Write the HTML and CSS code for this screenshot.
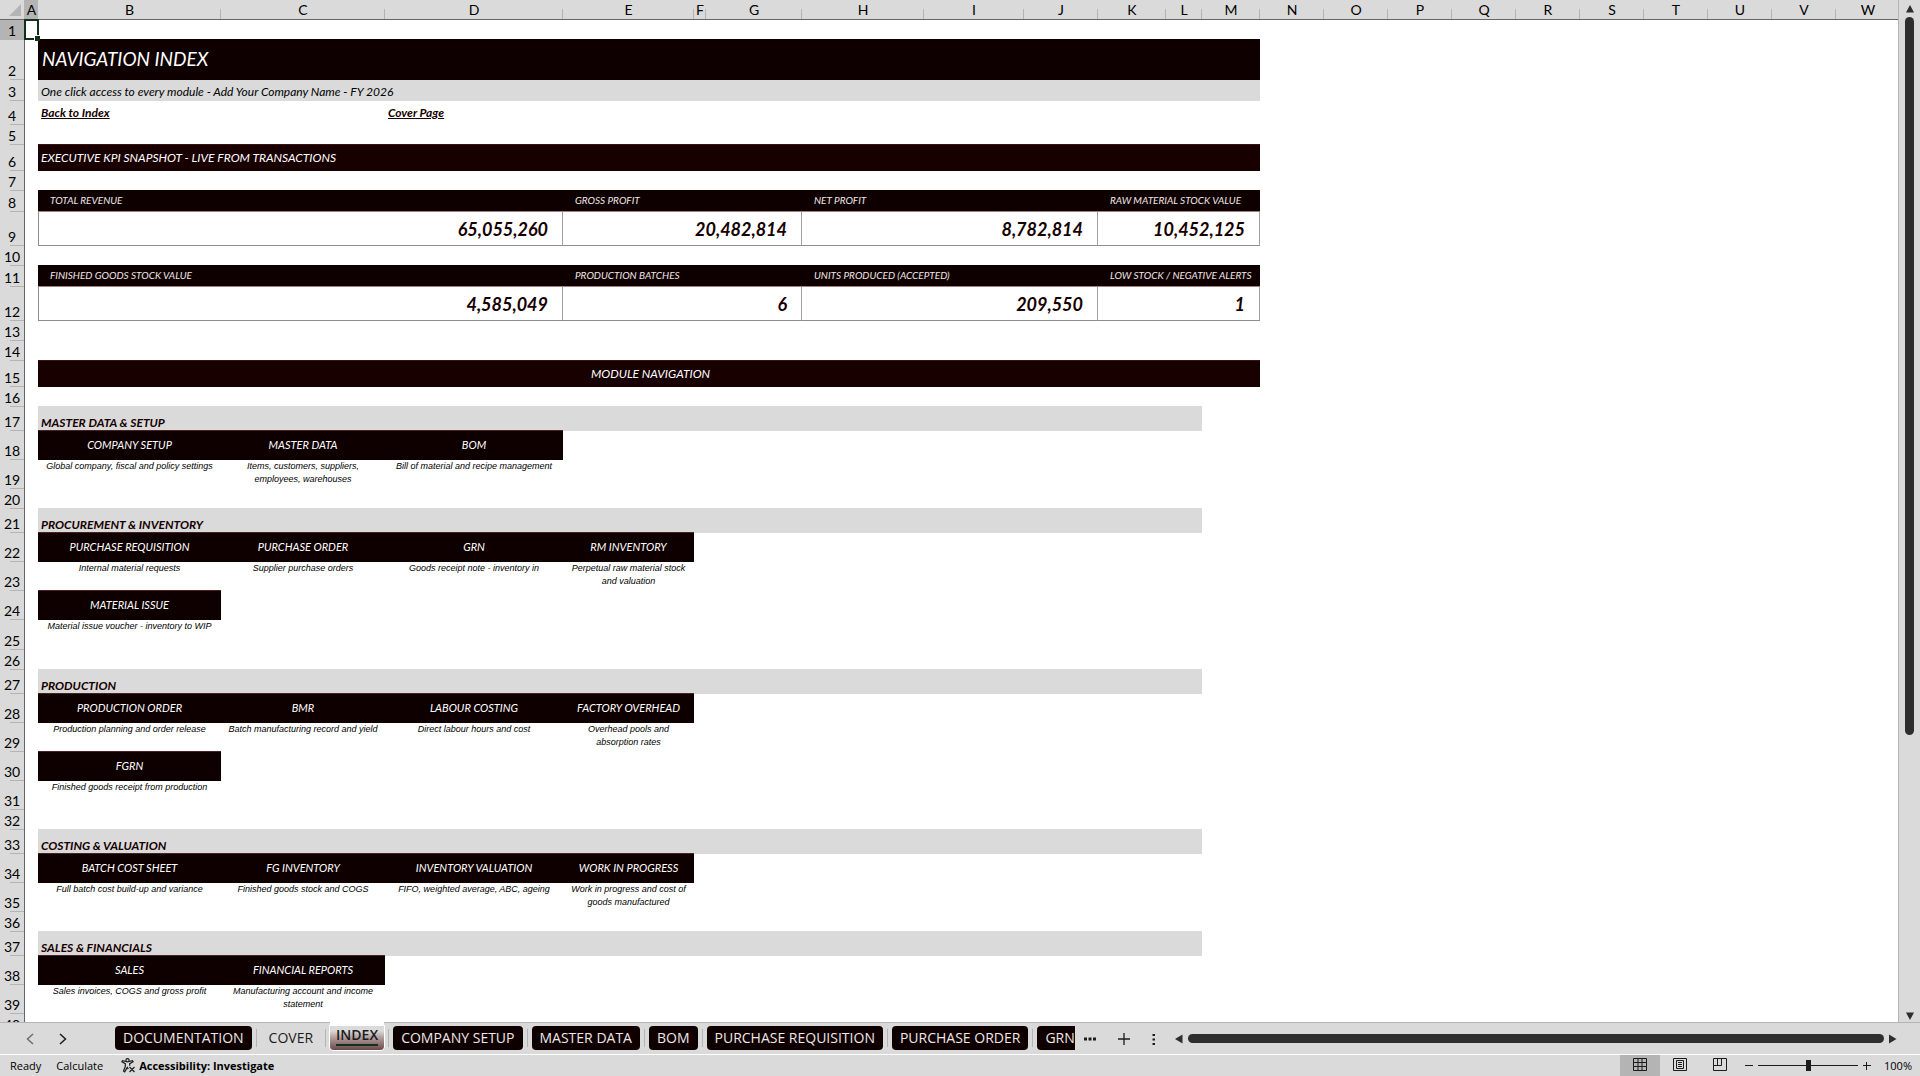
FILE: index.html
```html
<!DOCTYPE html>
<html lang="en">
<head>
    <meta charset="UTF-8">
    <meta name="viewport" content="width=device-width, initial-scale=1.0">
    <title>Navigation Index</title>
    <link rel="stylesheet" href="styles.css">
</head>
<body>
    <div class="workbook">
        <main class="sheet-area">
            <div class="sheet">
                <table class="grid">
                    <colgroup>
                        <col class="w-head"><col class="w-a"><col class="w-b"><col class="w-c"><col class="w-d"><col class="w-e"><col class="w-f"><col class="w-g"><col class="w-h"><col class="w-i"><col class="w-j"><col class="w-k"><col class="w-l"><col class="w-m">
                        <col span="10" class="w-std">
                    </colgroup>
                    <thead>
                        <tr>
                            <th class="corner"><svg width="12" height="12" viewBox="0 0 12 12"><path d="M12 0v12H0z" fill="#b4b4b4"/></svg></th>
                            <th class="active">A</th><th>B</th><th>C</th><th>D</th><th>E</th><th>F</th><th>G</th><th>H</th><th>I</th><th>J</th><th>K</th><th>L</th><th>M</th><th>N</th><th>O</th><th>P</th><th>Q</th><th>R</th><th>S</th><th>T</th><th>U</th><th>V</th><th>W</th>
                        </tr>
                    </thead>
                    <tbody>
                        <tr class="h20"><th class="active">1</th><td class="selected"></td></tr>
                        <tr class="h40"><th>2</th><td></td><td colspan="12" class="title">NAVIGATION INDEX</td></tr>
                        <tr class="h21"><th>3</th><td></td><td colspan="12" class="subtitle">One click access to every module - Add Your Company Name - FY 2026</td></tr>
                        <tr class="h24"><th>4</th><td></td><td colspan="2" class="link"><a href="#index">Back to Index</a></td><td class="link"><a href="#cover">Cover Page</a></td></tr>
                        <tr class="h20"><th>5</th></tr>
                        <tr class="h26"><th>6</th><td></td><td colspan="12" class="banner">EXECUTIVE KPI SNAPSHOT - LIVE FROM TRANSACTIONS</td></tr>
                        <tr class="h20"><th>7</th></tr>
                        <tr class="h21"><th>8</th><td></td><td colspan="3" class="kpi-name">TOTAL REVENUE</td><td colspan="3" class="kpi-name">GROSS PROFIT</td><td colspan="3" class="kpi-name">NET PROFIT</td><td colspan="3" class="kpi-name">RAW MATERIAL STOCK VALUE</td></tr>
                        <tr class="h34"><th>9</th><td></td><td colspan="3" class="kpi-value">65,055,260</td><td colspan="3" class="kpi-value">20,482,814</td><td colspan="3" class="kpi-value">8,782,814</td><td colspan="3" class="kpi-value">10,452,125</td></tr>
                        <tr class="h20"><th>10</th></tr>
                        <tr class="h21"><th>11</th><td></td><td colspan="3" class="kpi-name">FINISHED GOODS STOCK VALUE</td><td colspan="3" class="kpi-name">PRODUCTION BATCHES</td><td colspan="3" class="kpi-name">UNITS PRODUCED (ACCEPTED)</td><td colspan="3" class="kpi-name">LOW STOCK / NEGATIVE ALERTS</td></tr>
                        <tr class="h34"><th>12</th><td></td><td colspan="3" class="kpi-value">4,585,049</td><td colspan="3" class="kpi-value">6</td><td colspan="3" class="kpi-value">209,550</td><td colspan="3" class="kpi-value">1</td></tr>
                        <tr class="h20"><th>13</th></tr>
                        <tr class="h20"><th>14</th></tr>
                        <tr class="h26"><th>15</th><td></td><td colspan="12" class="banner center">MODULE NAVIGATION</td></tr>
                        <tr class="h20"><th>16</th></tr>

                        <!-- Master data -->
                        <tr class="h24"><th>17</th><td></td><td colspan="11" class="section">MASTER DATA &amp; SETUP</td></tr>
                        <tr class="h29"><th>18</th><td></td><td class="module"><a href="#company-setup">COMPANY SETUP</a></td><td class="module"><a href="#master-data">MASTER DATA</a></td><td class="module"><a href="#bom">BOM</a></td></tr>
                        <tr class="h29"><th>19</th><td></td><td class="note">Global company, fiscal and policy settings</td><td class="note">Items, customers, suppliers, employees, warehouses</td><td class="note">Bill of material and recipe management</td></tr>
                        <tr class="h20"><th>20</th></tr>

                        <!-- Procurement -->
                        <tr class="h24"><th>21</th><td></td><td colspan="11" class="section">PROCUREMENT &amp; INVENTORY</td></tr>
                        <tr class="h29"><th>22</th><td></td><td class="module"><a href="#pr">PURCHASE REQUISITION</a></td><td class="module"><a href="#po">PURCHASE ORDER</a></td><td class="module"><a href="#grn">GRN</a></td><td class="module"><a href="#rm">RM INVENTORY</a></td></tr>
                        <tr class="h29"><th>23</th><td></td><td class="note">Internal material requests</td><td class="note">Supplier purchase orders</td><td class="note">Goods receipt note - inventory in</td><td class="note">Perpetual raw material stock and valuation</td></tr>
                        <tr class="h29"><th>24</th><td></td><td class="module"><a href="#issue">MATERIAL ISSUE</a></td></tr>
                        <tr class="h30"><th>25</th><td></td><td class="note">Material issue voucher - inventory to WIP</td></tr>
                        <tr class="h20"><th>26</th></tr>

                        <!-- Production -->
                        <tr class="h24"><th>27</th><td></td><td colspan="11" class="section">PRODUCTION</td></tr>
                        <tr class="h29"><th>28</th><td></td><td class="module"><a href="#production-order">PRODUCTION ORDER</a></td><td class="module"><a href="#bmr">BMR</a></td><td class="module"><a href="#labour">LABOUR COSTING</a></td><td class="module"><a href="#overhead">FACTORY OVERHEAD</a></td></tr>
                        <tr class="h29"><th>29</th><td></td><td class="note">Production planning and order release</td><td class="note">Batch manufacturing record and yield</td><td class="note">Direct labour hours and cost</td><td class="note">Overhead pools and absorption rates</td></tr>
                        <tr class="h29"><th>30</th><td></td><td class="module"><a href="#fgrn">FGRN</a></td></tr>
                        <tr class="h29"><th>31</th><td></td><td class="note">Finished goods receipt from production</td></tr>
                        <tr class="h20"><th>32</th></tr>

                        <!-- Costing -->
                        <tr class="h24"><th>33</th><td></td><td colspan="11" class="section">COSTING &amp; VALUATION</td></tr>
                        <tr class="h29"><th>34</th><td></td><td class="module"><a href="#batch-cost">BATCH COST SHEET</a></td><td class="module"><a href="#fg">FG INVENTORY</a></td><td class="module"><a href="#valuation">INVENTORY VALUATION</a></td><td class="module"><a href="#wip">WORK IN PROGRESS</a></td></tr>
                        <tr class="h29"><th>35</th><td></td><td class="note">Full batch cost build-up and variance</td><td class="note">Finished goods stock and COGS</td><td class="note">FIFO, weighted average, ABC, ageing</td><td class="note">Work in progress and cost of goods manufactured</td></tr>
                        <tr class="h20"><th>36</th></tr>

                        <!-- Sales -->
                        <tr class="h24"><th>37</th><td></td><td colspan="11" class="section">SALES &amp; FINANCIALS</td></tr>
                        <tr class="h29"><th>38</th><td></td><td class="module"><a href="#sales">SALES</a></td><td class="module"><a href="#reports">FINANCIAL REPORTS</a></td></tr>
                        <tr class="h29"><th>39</th><td></td><td class="note">Sales invoices, COGS and gross profit</td><td class="note">Manufacturing account and income statement</td></tr>
                        <tr class="h20"><th>40</th></tr>
                    </tbody>
                </table>
            </div>
            <div class="v-scroll">
                <svg width="10" height="8" viewBox="0 0 10 8"><path d="M5 0l4 7.500H1z" fill="#2e2e2e"/></svg>
                <div class="v-track"><div class="v-thumb"></div></div>
                <svg width="10" height="8" viewBox="0 0 10 8"><path d="M5 8l4-7.500H1z" fill="#2e2e2e"/></svg>
            </div>
        </main>

        <nav class="tab-bar">
            <div class="tab-arrows">
                <button type="button" aria-label="Previous sheet"><svg width="8" height="12" viewBox="0 0 8 12"><path d="M7 1L1.500 6 7 11" fill="none" stroke="#6e6e6e" stroke-width="1.500"/></svg></button>
                <button type="button" aria-label="Next sheet"><svg width="8" height="12" viewBox="0 0 8 12"><path d="M1 1l5.500 5L1 11" fill="none" stroke="#1c1c1c" stroke-width="1.500"/></svg></button>
            </div>
            <div class="tabs">
                <button type="button" class="tab dark">DOCUMENTATION</button>
                <button type="button" class="tab">COVER</button>
                <button type="button" class="tab current"><span>INDEX</span></button>
                <button type="button" class="tab dark">COMPANY SETUP</button>
                <button type="button" class="tab dark">MASTER DATA</button>
                <button type="button" class="tab dark">BOM</button>
                <button type="button" class="tab dark">PURCHASE REQUISITION</button>
                <button type="button" class="tab dark">PURCHASE ORDER</button>
                <button type="button" class="tab dark">GRN</button>
            </div>
            <div class="tab-tools">
                <button type="button" aria-label="More sheets"><svg width="12" height="4" viewBox="0 0 12 4"><path d="M0 .5h3v3H0zM4.500.5h3v3h-3zM9 .5h3v3H9z" fill="#1c1c1c"/></svg></button>
                <button type="button" aria-label="New sheet"><svg width="12" height="12" viewBox="0 0 12 12"><path d="M6 0v12M0 6h12" stroke="#1c1c1c" stroke-width="1.300"/></svg></button>
                <button type="button" aria-label="Resize tabs"><svg width="4" height="12" viewBox="0 0 4 12"><path d="M.5 1h2.500v2H.5zM.5 5.500h2.500v2H.5zM.5 10h2.500v2H.5z" fill="#1c1c1c"/></svg></button>
            </div>
            <div class="h-scroll">
                <svg width="8" height="10" viewBox="0 0 8 10"><path d="M0 5l7.500-4.500v9z" fill="#2e2e2e"/></svg>
                <div class="h-thumb"></div>
                <svg width="8" height="10" viewBox="0 0 8 10"><path d="M7.500 5L0 .5v9z" fill="#2e2e2e"/></svg>
            </div>
        </nav>

        <footer class="status-bar">
            <span>Ready</span>
            <span>Calculate</span>
            <button type="button" class="access">
                <svg width="15" height="15" viewBox="0 0 15 15" fill="none" stroke="#1c1c1c" stroke-width="1.200"><circle cx="6.500" cy="2.200" r="1.600"/><path d="M5 3.500L1.500 2.600l-.6 1.200L4.300 5.600v3L2.500 13l1.200.8L6.300 9.500l1 1.600M8 3.500l3.500-.9.6 1.200L8.700 5.600v2.200M8.500 9l5 5M13.500 9l-5 5"/></svg>
                Accessibility: Investigate
            </button>
            <div class="right-tools">
                <div class="views">
                    <button type="button" class="on" aria-label="Normal view"><svg width="14" height="13" viewBox="0 0 14 13" fill="none" stroke="#1c1c1c"><path d="M.5.5h13v12H.5zM5 .5v12M9 .5v12M.5 4.500h13M.5 8.500h13"/></svg></button>
                    <button type="button" aria-label="Page layout"><svg width="14" height="13" viewBox="0 0 14 13" fill="none" stroke="#1c1c1c"><path d="M.5.5h13v12H.5zM3.500 2.500h7v8h-7zM5 4.500h4M5 6.500h4M5 8.500h4"/></svg></button>
                    <button type="button" aria-label="Page break preview"><svg width="14" height="13" viewBox="0 0 14 13" fill="none" stroke="#1c1c1c"><path d="M.5.5h13v12H.5zM4.500.5v7M8.500.5v7M.5 7.500h8"/></svg></button>
                </div>
                <div class="zoom">
                    <button type="button" aria-label="Zoom out"><svg width="8" height="8" viewBox="0 0 8 8"><path d="M0 3.500h8" stroke="#1c1c1c"/></svg></button>
                    <input type="range" min="0" max="100" value="50" aria-label="Zoom">
                    <button type="button" aria-label="Zoom in"><svg width="8" height="8" viewBox="0 0 8 8"><path d="M0 3.500h8M3.500 0v8" stroke="#1c1c1c"/></svg></button>
                    <span class="percent">100%</span>
                </div>
            </div>
        </footer>
    </div>
</body>
</html>
```
FILE: styles.css
```css
* {
    margin: 0;
    padding: 0;
    box-sizing: border-box;
}

body {
    font-family: Lato, "Open Sans", sans-serif;
    color: #1c1c1c;
    background: #dadada;
}

button {
    border: none;
    background: none;
    font: inherit;
    color: inherit;
}

svg {
    display: block;
    flex-shrink: 0;
}

.workbook {
    display: flex;
    flex-direction: column;
    height: 100vh;
    overflow: hidden;
}

/* Sheet */
.sheet-area {
    flex: 1;
    min-height: 0;
    display: flex;
}

.sheet {
    flex: 1;
    min-width: 0;
    overflow: hidden;
    background: #fff;
    border-right: 1px solid #b4b4b4;
}

.grid {
    width: 1899px;
    table-layout: fixed;
    border-collapse: separate;
    border-spacing: 0;
}

.w-head { width: 25px; }
.w-a { width: 13px; }
.w-b { width: 183px; }
.w-c { width: 164px; }
.w-d { width: 178px; }
.w-e { width: 131px; }
.w-f { width: 12px; }
.w-g { width: 96px; }
.w-h { width: 122px; }
.w-i { width: 100px; }
.w-j { width: 74px; }
.w-k { width: 68px; }
.w-l { width: 36px; }
.w-m { width: 58px; }
.w-std { width: 64px; }

.h20 { height: 20px; }
.h21 { height: 21px; }
.h24 { height: 24px; }
.h26 { height: 26px; }
.h29 { height: 29px; }
.h30 { height: 30px; }
.h34 { height: 34px; }
.h40 { height: 40px; }

.grid th {
    font-size: 14px;
    line-height: 16px;
    font-weight: 400;
    color: #000;
    background: #dadada;
}

.grid thead th {
    height: 20px;
    border-bottom: 1px solid #666;
    background: linear-gradient(#b4b4b4, #b4b4b4) right bottom / 1px 10px no-repeat #dadada;
}

.grid tbody th {
    padding-bottom: 1px;
    vertical-align: bottom;
    border-right: 1px solid #666;
    background: linear-gradient(#b4b4b4, #b4b4b4) right bottom / 14px 1px no-repeat #dadada;
}

.grid thead th.corner {
    border-right: 1px solid #b4b4b4;
    background: #dadada;
}

.corner svg {
    margin-left: 9px;
}

.grid thead th.active,
.grid tbody th.active {
    background: #b4b4b4;
}

.grid td {
    font-style: italic;
    white-space: nowrap;
}

.grid td.selected {
    position: relative;
}

.selected::before {
    content: "";
    position: absolute;
    inset: -1px -1px 0 -1px;
    border: 2px solid #12301a;
}

.selected::after {
    content: "";
    position: absolute;
    right: -2px;
    bottom: -1px;
    width: 5px;
    height: 5px;
    background: #12301a;
    border: 1px solid #fff;
    border-width: 1px 0 0 1px;
}

.grid td.title {
    padding: 0 0 3px 4px;
    font-size: 19px;
    color: #fff;
    background: #0f0000;
    box-shadow: 0 -1px #0f0000;
}

.grid td.subtitle {
    padding: 2px 0 0 3px;
    font-size: 12px;
    line-height: 16px;
    color: #000;
    background: #dadada;
}

.link {
    padding: 0 0 2px 3px;
    font-size: 12px;
    font-weight: 700;
}

.link a {
    color: #160000;
}

.grid td.banner {
    padding: 0 0 2px 3px;
    font-size: 12px;
    color: #fff;
    background: #190000;
    box-shadow: 0 -1px #3a1010;
}

.grid td.center {
    text-align: center;
}

.grid td.kpi-name {
    padding: 0 0 2px 12px;
    font-size: 10px;
    color: #f0e6e6;
    background: #0f0000;
    box-shadow: 0 -1px #0f0000;
    border-bottom: 1px solid #a08080;
}

.kpi-value {
    padding-right: 14px;
    font-size: 18px;
    font-weight: 700;
    text-align: right;
    color: #160000;
    border-right: 1px solid #a0a0a0;
    border-bottom: 1px solid #8c8c8c;
}

td:nth-child(3).kpi-value {
    border-left: 1px solid #8c8c8c;
}

.grid td.section {
    padding-left: 3px;
    font-size: 12px;
    line-height: 16px;
    font-weight: 700;
    vertical-align: bottom;
    color: #160000;
    background: #dadada;
    box-shadow: 0 -1px #dadada;
}

.grid td.module {
    padding-bottom: 2px;
    font-size: 11px;
    text-align: center;
    background: #0f0000;
    box-shadow: 0 -1px #4a2020;
}

.module a {
    color: #fff;
    text-decoration: none;
}

.grid td.note {
    padding: 0 6px;
    font-family: "Liberation Sans", Arial, sans-serif;
    font-size: 9px;
    line-height: 13px;
    text-align: center;
    vertical-align: top;
    white-space: normal;
    color: #000;
}

/* Vertical scroll bar */
.v-scroll {
    display: flex;
    flex-direction: column;
    align-items: center;
    width: 21px;
    padding: 5px 0 2px;
}

.v-track {
    flex: 1;
    padding: 4px 0;
}

.v-thumb {
    width: 9px;
    height: 72.5%;
    border-radius: 5px;
    background: #2e2e2e;
}

/* Sheet tabs */
.tab-bar {
    display: flex;
    align-items: center;
    height: 32px;
    border-top: 1px solid #b4b4b4;
    font-family: "Open Sans", sans-serif;
}

.tab-arrows {
    display: flex;
    gap: 25px;
    width: 115px;
    padding-left: 26px;
}

.tabs {
    display: flex;
    gap: 9px;
    width: 960px;
    height: 32px;
    margin-top: -1px;
    padding-top: 4px;
    overflow: hidden;
}

.tab {
    position: relative;
    flex-shrink: 0;
    height: 24px;
    padding: 0 8px;
    font-size: 14px;
    line-height: 24px;
}

/* divider between tabs */
.tab + .tab::before {
    content: "";
    position: absolute;
    left: -5px;
    top: 3px;
    width: 1px;
    height: 18px;
    background: #b4b4b4;
}

.dark {
    color: #f0e6e6;
    background: #0f0000;
    border-radius: 4px;
}

.current {
    padding: 0 6px;
    font-weight: 600;
    border-radius: 0 0 4px 4px;
    background: linear-gradient(#dadada 20%, #b09a9a 50%, #6a4848);
    box-shadow: 0 0 0 1px #fff, 0 -4px #fff;
}

.current span {
    display: block;
    line-height: 18px;
    margin-bottom: 4px;
    border-bottom: 2px solid #12301a;
}

.tab-tools {
    display: flex;
    align-items: center;
    gap: 22px;
    padding: 0 19px 0 9px;
}

.h-scroll {
    flex: 1;
    display: flex;
    align-items: center;
    gap: 5px;
    padding-right: 23px;
}

.h-thumb {
    flex: 1;
    height: 9px;
    border-radius: 5px;
    background: #2e2e2e;
}

/* Status bar */
.status-bar {
    display: flex;
    align-items: center;
    gap: 15px;
    height: 22px;
    padding-left: 10px;
    border-top: 1px solid #fff;
    font-family: "Open Sans", sans-serif;
    font-size: 11px;
    color: #000;
}

.access {
    display: flex;
    align-items: center;
    gap: 3px;
    padding-left: 3px;
    font-weight: 700;
}

.right-tools {
    display: flex;
    align-self: stretch;
    gap: 5px;
    margin-left: auto;
}

.views {
    display: flex;
}

.views button {
    display: flex;
    align-items: center;
    justify-content: center;
    width: 40px;
    padding-bottom: 2px;
}

.views .on {
    background: #b4b4b4;
}

.zoom {
    display: flex;
    align-items: center;
    gap: 5px;
    padding-right: 8px;
}

.zoom input {
    appearance: none;
    width: 100px;
    height: 12px;
    background: linear-gradient(#1c1c1c, #1c1c1c) center / 100% 1px no-repeat;
}

.zoom input::-webkit-slider-thumb {
    appearance: none;
    width: 5px;
    height: 11px;
    background: #1c1c1c;
}

.percent {
    margin-left: 8px;
}
```
